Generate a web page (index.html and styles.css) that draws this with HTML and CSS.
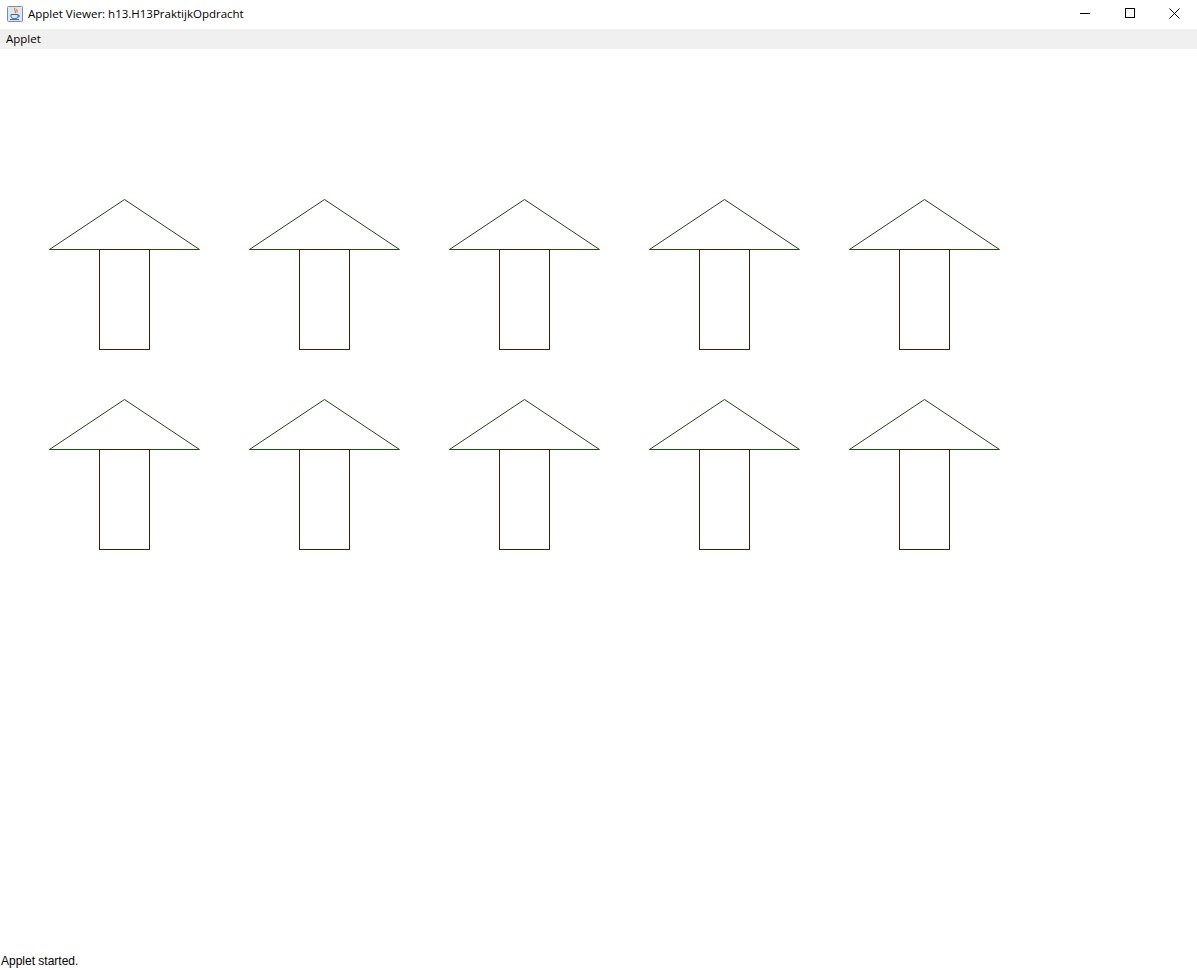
FILE: index.html
```html
<!DOCTYPE html>
<html>
<head>
<meta charset="utf-8">
<title>Applet Viewer</title>
<link rel="stylesheet" href="styles.css">
</head>
<body>
<div class="window">
  <div class="titlebar">
    <svg class="app-icon" width="16" height="16" viewBox="0 0 16 16">
      <rect x="0.5" y="0.5" width="15" height="15" rx="1" fill="#dfe7f1" stroke="#7a8ea8"/>
      <path d="M8 2 C6 4 10 5 8 7 M10 3 C9 4.5 11 5 9.8 6.5" stroke="#e0762a" stroke-width="1.1" fill="none"/>
      <path d="M4 8.5 H11 V10.5 C11 12 9.5 12.5 7.5 12.5 C5.5 12.5 4 12 4 10.5 Z" fill="none" stroke="#3b6aa8" stroke-width="1"/>
      <path d="M11 9 C13 9 13 11 11 11" stroke="#3b6aa8" fill="none"/>
      <path d="M3 13.5 H12" stroke="#3b6aa8"/>
    </svg>
    <span class="title-text">Applet Viewer: h13.H13PraktijkOpdracht</span>
    <div class="controls">
      <span class="ctl"><svg width="10" height="10" viewBox="0 0 10 10"><path d="M0 5.5 H10" stroke="#000" stroke-width="1"/></svg></span>
      <span class="ctl"><svg width="10" height="10" viewBox="0 0 10 10"><rect x="0.5" y="0.5" width="9" height="9" fill="none" stroke="#000" stroke-width="1"/></svg></span>
      <span class="ctl"><svg width="11" height="11" viewBox="0 0 11 11"><path d="M0.5 0.5 L10.5 10.5 M10.5 0.5 L0.5 10.5" stroke="#000" stroke-width="1"/></svg></span>
    </div>
  </div>
  <div class="menubar"><span class="menu-item">Applet</span></div>
  <div class="canvas">
    <svg class="drawing" width="1197" height="900" viewBox="0 49 1197 900" shape-rendering="crispEdges">
      <g id="arrows"></g>
    </svg>
  </div>
  <div class="statusbar">Applet started.</div>
</div>
<script src="script.js"></script>
</body>
</html>
```

FILE: styles.css
```css
html, body {
  margin: 0;
  padding: 0;
  background: #ffffff;
}
.window {
  width: 1197px;
  height: 970px;
  display: flex;
  flex-direction: column;
  overflow: hidden;
}
.titlebar {
  height: 29px;
  display: flex;
  align-items: center;
  background: #ffffff;
  font-family: "Open Sans", "Noto Sans", "Liberation Sans", sans-serif;
  font-size: 11.5px;
  color: #000;
}
.app-icon {
  margin-left: 7px;
  margin-right: 5px;
  margin-top: -2px;
}
.title-text {
  margin-top: -3px;
}
.controls {
  margin-left: auto;
  display: flex;
  height: 29px;
}
.ctl {
  width: 45px;
  height: 26px;
  display: flex;
  align-items: center;
  justify-content: center;
}
.menubar {
  height: 20px;
  background: #f0f0f0;
  display: flex;
  align-items: center;
  font-family: "Open Sans", "Noto Sans", "Liberation Sans", sans-serif;
  font-size: 11.5px;
}
.menu-item {
  padding-left: 6px;
  margin-top: -2px;
}
.canvas {
  flex: 1;
  background: #ffffff;
  overflow: hidden;
}
.drawing {
  display: block;
}
.tri {
  fill: none;
  stroke: #1f4a10;
  stroke-width: 1;
}
.body-rect {
  fill: none;
  stroke: #3a1f08;
  stroke-width: 1;
}
.statusbar {
  height: 19px;
  font-family: "Liberation Sans", Arial, sans-serif;
  font-size: 12px;
  color: #000;
  padding-left: 1px;
  line-height: 20px;
}
```

FILE: script.js
```js
(function () {
  var ns = "http://www.w3.org/2000/svg";
  var g = document.getElementById("arrows");
  for (var r = 0; r < 2; r++) {
    for (var c = 0; c < 5; c++) {
      var x = 49 + c * 200;
      var y = 249 + r * 200;
      var p = document.createElementNS(ns, "polygon");
      p.setAttribute("points",
        (x + 0.5) + "," + (y + 0.5) + " " +
        (x + 75.5) + "," + (y - 49.5) + " " +
        (x + 150.5) + "," + (y + 0.5));
      p.setAttribute("class", "tri");
      p.setAttribute("shape-rendering", "auto");
      g.appendChild(p);
      var rc = document.createElementNS(ns, "rect");
      rc.setAttribute("x", x + 50.5);
      rc.setAttribute("y", y + 0.5);
      rc.setAttribute("width", 50);
      rc.setAttribute("height", 100);
      rc.setAttribute("class", "body-rect");
      g.appendChild(rc);
    }
  }
})();
```
